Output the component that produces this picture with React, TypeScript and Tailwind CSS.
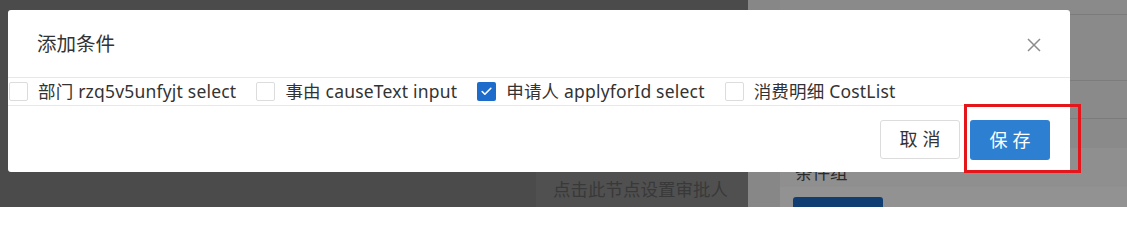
import { Check } from 'lucide-react';

type Field = {
    label: string;
    checked: boolean;
};

const fields: Field[] = [
    { label: '部门 rzq5v5unfyjt select', checked: false },
    { label: '事由 causeText input', checked: false },
    { label: '申请人 applyforId select', checked: true },
    { label: '消费明细 CostList', checked: false },
];

const font = { fontFamily: '"Noto Sans", "Noto Sans CJK SC", sans-serif' };

function Checkbox({ checked }: { checked: boolean }) {
    if (checked) {
        return (
            <span className="flex h-[19px] w-[19px] shrink-0 items-center justify-center rounded-[2px] bg-[#1d6ccb]">
                <Check className="h-[13px] w-[13px] text-white" strokeWidth={3} />
            </span>
        );
    }
    return <span className="h-[19px] w-[19px] shrink-0 rounded-[2px] border border-[#dcdcdc] bg-white" />;
}

export default function App() {
    return (
        <div className="relative flex h-[207px] w-[1127px] overflow-hidden" style={font}>
            {/* dimmed canvas */}
            <div className="flex h-full w-[748px] flex-col justify-end bg-[#4b4b4b]">
                <div className="ml-[536px] flex h-[44px] w-[212px] items-center bg-[#505050] pl-[17px] pt-[8px] text-[17.5px] text-[#393939]">
                    点击此节点设置审批人
                </div>
            </div>

            {/* dimmed drawer */}
            <div className="flex h-full flex-1 bg-[#878787]">
                <div className="ml-[32px] flex flex-1 flex-col bg-[#8a8a8a]">
                    <div className="h-[15px] border-b border-[#7c7c7c]" />
                    <div className="h-[69px] border-b border-[#7c7c7c]" />
                    <div className="h-[39px] border-b border-[#7c7c7c]" />
                    <div className="h-[30px]" />
                    <div className="flex h-[40px] items-center bg-[#8f8f8f] pl-[15px] pt-[10px] text-[17.5px] text-[#2a2a2a]">
                        条件组
                    </div>
                    <div className="flex-1 bg-[#929292] pl-[13px] pt-[10px]">
                        <div className="h-[10px] w-[90px] rounded-t-[3px] bg-[#103e72]" />
                    </div>
                </div>
            </div>

            {/* modal */}
            <div className="absolute left-[8px] top-[10px] flex h-[162px] w-[1062px] flex-col rounded-[3px] bg-white">
                <div className="flex h-[68px] items-center justify-between border-b border-[#e8e8e8] pl-[29px] pr-[29px]">
                    <span className="text-[19.5px] text-[#333]">添加条件</span>
                    <svg width="14" height="14" viewBox="0 0 14 14" className="mt-[3px]">
                        <path d="M1 1L13 13M13 1L1 13" stroke="#8c8c8c" strokeWidth="1.5" fill="none" />
                    </svg>
                </div>
                <div className="flex h-[28px] items-center gap-[20px] border-b border-[#e8e8e8] pl-[1px]">
                    {fields.map((f) => (
                        <label key={f.label} className="flex items-center gap-[10px] text-[17.5px] tracking-[0.2px] text-[#333]">
                            <Checkbox checked={f.checked} />
                            <span>{f.label}</span>
                        </label>
                    ))}
                </div>
                <div className="flex justify-end gap-[10px] pr-[20px] pt-[14px]">
                    <button className="flex h-[39px] w-[80px] items-center justify-center rounded-[3px] border border-[#dcdcdc] bg-white pl-[5px] text-[18px] tracking-[5px] text-[#333]">
                        取消
                    </button>
                    <button className="flex h-[40px] w-[80px] items-center justify-center rounded-[3px] bg-[#2d7fd1] pl-[5px] text-[18px] tracking-[5px] text-white">
                        保存
                    </button>
                </div>
            </div>

            {/* highlight */}
            <div className="absolute left-[964px] top-[104px] h-[69px] w-[117px] border-[3px] border-[#e3161b]" />
        </div>
    );
}
